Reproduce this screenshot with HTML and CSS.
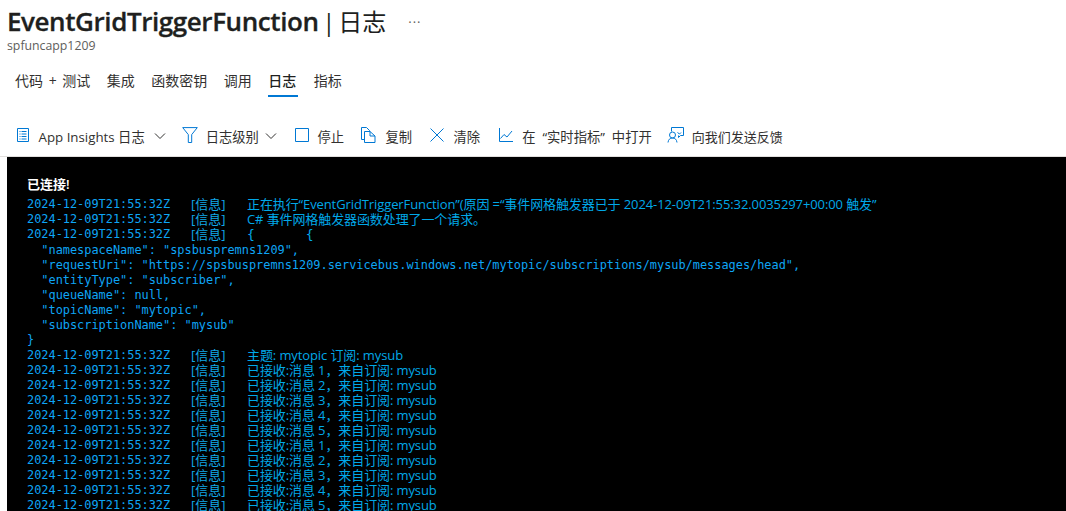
FILE: index.html
```html
<!DOCTYPE html>
<html lang="zh-CN">
<head>
<meta charset="utf-8">
<title>EventGridTriggerFunction | 日志</title>
<link rel="stylesheet" href="styles.css">
</head>
<body>
<header class="head">
  <div class="title-row">
    <h1 class="title"><strong>EventGridTriggerFunction</strong> <span class="sep">|</span> <span class="title-rest">日志</span></h1>
    <span class="more">···</span>
  </div>
  <div class="subtitle">spfuncapp1209</div>
</header>
<nav class="tabs">
  <a class="tab first">代码 + 测试</a>
  <a class="tab">集成</a>
  <a class="tab">函数密钥</a>
  <a class="tab">调用</a>
  <a class="tab active">日志</a>
  <a class="tab">指标</a>
</nav>
<div class="toolbar">
  <button class="tool t1">
    <svg class="ico" viewBox="0 0 12 14"><path d="M.5 .5h11v13h-11z M2.500 3.500h1 M4.500 3.500h5 M2.500 6h1 M4.500 6h5 M2.500 8.500h1 M4.500 8.500h5 M2.500 11h1 M4.500 11h5"/></svg>
    <span>App Insights 日志</span>
    <svg class="chev" viewBox="0 0 12 8"><path d="M1 1.500l5 5 5-5"/></svg>
  </button>
  <button class="tool t2">
    <svg class="ico" viewBox="0 0 16 16"><path d="M.7 .6h14.600l-5.600 7v7.900h-3.400V7.600z"/></svg>
    <span>日志级别</span>
    <svg class="chev" viewBox="0 0 12 8"><path d="M1 1.500l5 5 5-5"/></svg>
  </button>
  <button class="tool t3">
    <svg class="ico" viewBox="0 0 14 14"><path d="M.5 .5h13v13h-13z"/></svg>
    <span>停止</span>
  </button>
  <button class="tool t4">
    <svg class="ico" viewBox="0 0 15 16"><path d="M3.500 12.500H.5V.5h5l3 3v1M3.500 4.500h5.500l5 4.500v6.500H3.500zM9 4.500v4.500h5"/></svg>
    <span>复制</span>
  </button>
  <button class="tool t5">
    <svg class="ico" viewBox="0 0 14 14"><path d="M.5 .5l13 13M13.500 .5l-13 13"/></svg>
    <span>清除</span>
  </button>
  <button class="tool t6">
    <svg class="ico" viewBox="0 0 14 14"><path d="M.5 0v13.500H14M1.500 10.500l3.500-4 3 2.500 5-6"/></svg>
    <span class="wide-text">在 “实时指标” 中打开</span>
  </button>
  <button class="tool t7">
    <svg class="ico" viewBox="0 0 17 16"><path d="M4.500 4.500V.5h12v8h-3l-2 2v-2M1 15.500c.3-3 2-4.500 4.500-4.500s4.200 1.500 4.500 4.500M5.500 11a3 3 0 1 0 0-6a3 3 0 0 0 0 6zM10.500 5.500l2 1.500 1.500-1.500"/></svg>
    <span>向我们发送反馈</span>
  </button>
</div>
<main class="console">
  <div class="connected">已连接!</div>
  <div class="row"><span class="ts">2024-12-09T21:55:32Z</span><span class="lvl">[信息]</span><span class="msg">正在执行“EventGridTriggerFunction”(原因 =“事件网格触发器已于 2024-12-09T21:55:32.0035297+00:00 触发”</span></div>
  <div class="row"><span class="ts">2024-12-09T21:55:32Z</span><span class="lvl">[信息]</span><span class="msg">C# 事件网格触发器函数处理了一个请求。</span></div>
  <div class="row"><span class="ts">2024-12-09T21:55:32Z</span><span class="lvl">[信息]</span><span class="msg"><span class="brace">{</span><span class="brace second">{</span></span></div>
  <pre class="json">  "namespaceName": "spsbuspremns1209",
  "requestUri": "https://spsbuspremns1209.servicebus.windows.net/mytopic/subscriptions/mysub/messages/head",
  "entityType": "subscriber",
  "queueName": null,
  "topicName": "mytopic",
  "subscriptionName": "mysub"
}</pre>
  <div class="row"><span class="ts">2024-12-09T21:55:32Z</span><span class="lvl">[信息]</span><span class="msg">主题: mytopic 订阅: mysub</span></div>
  <div class="row"><span class="ts">2024-12-09T21:55:32Z</span><span class="lvl">[信息]</span><span class="msg">已接收:消息 1，来自订阅: mysub</span></div>
  <div class="row"><span class="ts">2024-12-09T21:55:32Z</span><span class="lvl">[信息]</span><span class="msg">已接收:消息 2，来自订阅: mysub</span></div>
  <div class="row"><span class="ts">2024-12-09T21:55:32Z</span><span class="lvl">[信息]</span><span class="msg">已接收:消息 3，来自订阅: mysub</span></div>
  <div class="row"><span class="ts">2024-12-09T21:55:32Z</span><span class="lvl">[信息]</span><span class="msg">已接收:消息 4，来自订阅: mysub</span></div>
  <div class="row"><span class="ts">2024-12-09T21:55:32Z</span><span class="lvl">[信息]</span><span class="msg">已接收:消息 5，来自订阅: mysub</span></div>
  <div class="row"><span class="ts">2024-12-09T21:55:32Z</span><span class="lvl">[信息]</span><span class="msg">已接收:消息 1，来自订阅: mysub</span></div>
  <div class="row"><span class="ts">2024-12-09T21:55:32Z</span><span class="lvl">[信息]</span><span class="msg">已接收:消息 2，来自订阅: mysub</span></div>
  <div class="row"><span class="ts">2024-12-09T21:55:32Z</span><span class="lvl">[信息]</span><span class="msg">已接收:消息 3，来自订阅: mysub</span></div>
  <div class="row"><span class="ts">2024-12-09T21:55:32Z</span><span class="lvl">[信息]</span><span class="msg">已接收:消息 4，来自订阅: mysub</span></div>
  <div class="row"><span class="ts">2024-12-09T21:55:32Z</span><span class="lvl">[信息]</span><span class="msg">已接收:消息 5，来自订阅: mysub</span></div>
</main>
</body>
</html>
```
FILE: styles.css
```css
* { box-sizing: border-box; }
html, body { margin: 0; padding: 0; height: 511px; overflow: hidden; background: #fff; }
body {
  font-family: "Open Sans", "Noto Sans CJK SC", sans-serif;
  color: #323130;
  display: flex;
  flex-direction: column;
}
.head { padding: 5px 0 0 7px; height: 57px; flex: none; }
.title-row { display: flex; align-items: center; height: 33px; }
.title {
  margin: 0;
  font-size: 26px;
  font-weight: 400;
  line-height: 33px;
  color: #201f1e;
  white-space: nowrap;
}
.title strong { font-weight: 600; letter-spacing: -0.42px; -webkit-text-stroke: 0.3px #201f1e; }
.title-rest { font-size: 24px; margin-left: -4px; }
.sep { color: #201f1e; font-size: 24px; margin-left: -3px; }
.more { margin-left: 22px; font-size: 13px; color: #605e5c; letter-spacing: 1px; }
.subtitle { font-size: 12.3px; line-height: 16px; color: #605e5c; }
.tabs { display: flex; height: 40px; flex: none; padding: 9px 0 0 15px; gap: 16.5px; }
.tab {
  font-size: 14px;
  line-height: 20px;
  height: 31px;
  padding-top: 5px;
  color: #323130;
  white-space: nowrap;
}
.first { word-spacing: 2px; }
.active { color: #201f1e; font-weight: 500; border-bottom: 2px solid #0078d4; padding-right: 2px; margin-right: -1px; }
.toolbar {
  display: flex;
  align-items: center;
  height: 60px;
  padding: 19px 0 0 17px;
  flex: none;
  background: #fff;
  border-bottom: 1px solid #e1dfdd;
}
.tool {
  display: flex;
  align-items: center;
  gap: 8px;
  border: 0;
  background: none;
  padding: 0;
  font: inherit;
  font-size: 13.3px;
  color: #323130;
  white-space: nowrap;
}
.ico { height: 16px; width: 16px; fill: none; stroke: #0078d4; stroke-width: 1; flex: none; margin-top: -2px; }
.chev { width: 12px; height: 8px; fill: none; stroke: #323130; stroke-width: 1; flex: none; }
.t1 { gap: 9.500px; margin-right: 16px; }
.t1 .ico { width: 12px; height: 14px; }
.t2 { gap: 7.500px; margin-right: 18px; }
.t2 .chev { margin-left: -1px; }
.t3 { margin-right: 17.500px; }
.t3 .ico, .t5 .ico, .t6 .ico { width: 14px; height: 14px; }
.t4 { gap: 9px; margin-right: 17.500px; }
.t4 .ico { width: 15px; }
.t5 { gap: 10px; margin-right: 19px; }
.t6 { gap: 9px; margin-right: 15px; }
.wide-text { word-spacing: 3.500px; }
.t7 { font-size: 13px; }
.t7 .ico { width: 17px; }
.console {
  flex: 1;
  margin-left: 7px;
  background: #000;
  padding: 20px 0 0 20px;
  overflow: hidden;
  font-size: 13px;
  line-height: 15px;
  color: #00a4ef;
}
.connected { color: #fff; font-size: 13px; font-weight: 600; line-height: 15px; margin-bottom: 5px; }
.row { display: flex; height: 15px; white-space: pre; }
.ts { width: 164px; font-family: "DejaVu Sans Mono", monospace; font-size: 11.9px; color: #0ea5f5; flex: none; }
.lvl { width: 56px; flex: none; color: #12a8e8; }
.msg { color: #00a8e8; letter-spacing: -0.1px; }
.brace { font-family: "DejaVu Sans Mono", monospace; display: inline-block; }
.brace.second { margin-left: 51px; }
.json {
  margin: 1px 0 0;
  font-family: "DejaVu Sans Mono", monospace;
  font-size: 11.9px;
  line-height: 15px;
  color: #0ea5f5;
}
```
